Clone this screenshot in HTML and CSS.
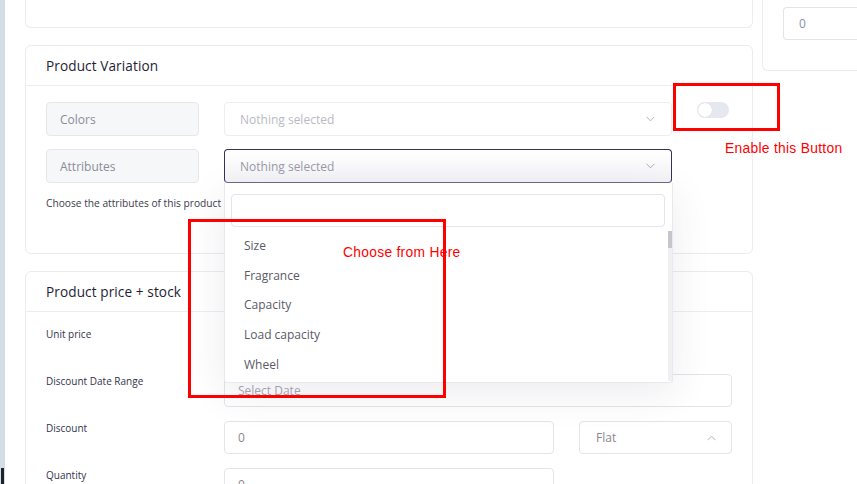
FILE: index.html
```html
<!DOCTYPE html>
<html lang="en">
<head>
<meta charset="utf-8">
<title>Product Variation</title>
<link rel="stylesheet" href="styles.css">
</head>
<body>
<div class="page">
  <div class="edge"><div class="edge-dark"></div></div>
  <main class="main">
    <section class="card card-cut"></section>

    <section class="card card-variation">
      <div class="card-header">Product Variation</div>
      <div class="card-body">
        <div class="var-row">
          <div class="label-box">Colors</div>
          <div class="select">
            <span class="placeholder">Nothing selected</span>
            <svg class="chev" width="9" height="6" viewBox="0 0 9 6"><path d="M0.5 0.8 L4.5 4.8 L8.5 0.8" fill="none" stroke="#b4b4c0" stroke-width="1"/></svg>
          </div>
          <div class="toggle"><span class="knob"></span></div>
        </div>
        <div class="var-row">
          <div class="label-box">Attributes</div>
          <div class="select-wrap">
            <div class="select select-open">
              <span class="placeholder dark">Nothing selected</span>
              <svg class="chev" width="9" height="6" viewBox="0 0 9 6"><path d="M0.5 0.8 L4.5 4.8 L8.5 0.8" fill="none" stroke="#a8a8b6" stroke-width="1"/></svg>
            </div>
            <div class="dropdown">
              <div class="dd-search"></div>
              <div class="dd-list">
                <ul class="dd-items">
                  <li>Size</li>
                  <li>Fragrance</li>
                  <li>Capacity</li>
                  <li>Load capacity</li>
                  <li>Wheel</li>
                </ul>
                <div class="dd-scroll"><div class="dd-thumb"></div></div>
              </div>
            </div>
          </div>
        </div>
        <p class="help">Choose the attributes of this product</p>
      </div>
    </section>

    <section class="card card-price">
      <div class="card-header">Product price + stock</div>
      <div class="card-body price-body">
        <div class="price-row">
          <div class="field-label">Unit price</div>
          <div class="input"><span class="value">0</span></div>
        </div>
        <div class="price-row">
          <div class="field-label">Discount Date Range</div>
          <div class="input input-wide"><span class="placeholder date">Select Date</span></div>
        </div>
        <div class="price-row">
          <div class="field-label">Discount</div>
          <div class="input"><span class="value">0</span></div>
          <div class="input select-flat">
            <span class="value">Flat</span>
            <svg class="chev" width="9" height="6" viewBox="0 0 9 6"><path d="M0.5 5.2 L4.5 1.2 L8.5 5.2" fill="none" stroke="#b9b0bd" stroke-width="1"/></svg>
          </div>
        </div>
        <div class="price-row">
          <div class="field-label">Quantity</div>
          <div class="input"><span class="value">0</span></div>
        </div>
      </div>
    </section>
  </main>
  <aside class="side">
    <div class="card side-card">
      <div class="input side-input"><span class="value blue">0</span></div>
    </div>
  </aside>
</div>

<div class="note-box note-box-toggle"></div>
<div class="note-text note-text-toggle">Enable this Button</div>
<div class="note-box note-box-list"></div>
<div class="note-text note-text-list">Choose from Here</div>
</body>
</html>
```

FILE: styles.css
```css
* { box-sizing: border-box; }

html, body {
  margin: 0;
  padding: 0;
  background: #ffffff;
}

body {
  width: 857px;
  height: 484px;
  overflow: hidden;
  position: relative;
  font-family: "Open Sans", "Liberation Sans", sans-serif;
  color: #23233a;
}

.page {
  display: flex;
  height: 484px;
  overflow: hidden;
}

.edge {
  width: 5px;
  flex: none;
  background: #d3dde6;
  display: flex;
  flex-direction: column;
}

.edge-dark {
  margin-top: auto;
  margin-left: 1px;
  width: 3px;
  height: 16px;
  background: #1f1f2e;
}

.main {
  width: 748px;
  flex: none;
  padding-left: 20px;
  display: flex;
  flex-direction: column;
  gap: 17px;
}

.card {
  background: #ffffff;
  border: 1px solid #ebebf0;
  border-radius: 6px;
  flex: none;
}

.card-cut {
  height: 28px;
  border-top: none;
  border-radius: 0 0 6px 6px;
}

.card-header {
  height: 40px;
  border-bottom: 1px solid #ececf1;
  padding: 0 20px;
  display: flex;
  align-items: center;
  font-size: 13.6px;
  font-weight: 500;
  color: #1e1e36;
  letter-spacing: 0.1px;
}

.card-body {
  padding: 16px 20px 0 20px;
}

.card-variation {
  height: 209px;
}

.var-row {
  display: grid;
  grid-template-columns: 153px 448px 32px;
  column-gap: 25px;
  align-items: start;
  margin-bottom: 13px;
}

.var-row:nth-child(2) {
  margin-bottom: 0;
}

.label-box {
  height: 34px;
  background: #f6f7f9;
  border: 1px solid #e5e7ec;
  border-radius: 4px;
  padding-left: 13px;
  display: flex;
  align-items: center;
  font-size: 12px;
  color: #8b8b98;
}

.select {
  height: 34px;
  border: 1px solid #ececf2;
  border-radius: 4px;
  padding: 0 14px 0 15px;
  display: flex;
  align-items: center;
  justify-content: space-between;
  background: #ffffff;
}

.select-wrap {
  position: relative;
}

.select-open {
  border-color: #34315a;
  border-bottom-color: #6d6a8e;
  background: linear-gradient(#ffffff, #f3f3f7);
}

.placeholder {
  font-size: 12px;
  color: #b9b9c4;
}

.placeholder.dark {
  color: #9a9aa8;
}

.chev {
  display: block;
  margin-right: 2px;
}

.toggle {
  width: 32px;
  height: 16px;
  border-radius: 8px;
  background: #e5e8ef;
  padding: 1px;
  display: flex;
}

.knob {
  width: 14px;
  height: 14px;
  border-radius: 50%;
  background: #ffffff;
  box-shadow: 0 0 1px rgba(0, 0, 0, 0.15);
}

.dropdown {
  position: absolute;
  top: 100%;
  left: 0;
  width: 449px;
  height: 200px;
  background: #ffffff;
  border: 1px solid #e8e8ee;
  border-top: none;
  border-radius: 0 0 3px 3px;
  box-shadow: 0 10px 40px rgba(40, 40, 80, 0.09);
  z-index: 5;
  padding: 11px 7px 0 6px;
  display: flex;
  flex-direction: column;
}

.dd-search {
  height: 33px;
  border: 1px solid #e3e3ea;
  border-radius: 4px;
}

.dd-list {
  margin-top: 4px;
  height: 150px;
  display: flex;
  margin-right: -7px;
}

.dd-items {
  list-style: none;
  margin: 0;
  padding: 0;
  flex: 1;
}

.dd-items li {
  height: 29.6px;
  display: flex;
  align-items: center;
  padding-left: 13px;
  font-size: 12px;
  color: #5a5a66;
}

.dd-scroll {
  width: 4px;
  height: 150px;
  background: #f0f0f2;
}

.dd-thumb {
  height: 17px;
  background: #c6c6cc;
}

.help {
  margin: 13px 0 0 0;
  font-size: 10.2px;
  color: #3b3b4c;
  line-height: 14px;
}

.card-price {
  height: 260px;
}

.price-body {
  padding-top: 15px;
}

.price-row {
  display: grid;
  grid-template-columns: 153px 330px 153px;
  column-gap: 25px;
  align-items: start;
  margin-bottom: 14px;
}

.field-label {
  font-size: 10px;
  color: #33334a;
  padding-top: 1px;
  line-height: 12px;
}

.input {
  height: 33px;
  border: 1px solid #e3e3ea;
  border-radius: 4px;
  padding: 0 14px 0 13px;
  display: flex;
  align-items: center;
  justify-content: space-between;
  background: #ffffff;
}

.input-wide {
  grid-column: 2 / 4;
}

.value {
  font-size: 12px;
  color: #8d8590;
}

.value.blue {
  color: #8a8fb0;
}

.placeholder.date {
  color: #a7a7b4;
}

.select-flat {
  padding-left: 16px;
  padding-right: 13px;
}

.side {
  margin-left: 9px;
  width: 120px;
  flex: none;
}

.side-card {
  height: 71px;
  border-top: none;
  border-right: none;
  border-radius: 0 0 0 6px;
  padding: 7px 0 0 20px;
}

.side-input {
  border-right: none;
  border-radius: 4px 0 0 4px;
  padding-left: 15px;
}

/* annotation overlays */
.note-box {
  position: absolute;
  border: 3px solid #ff0000;
  z-index: 10;
}

.note-box-toggle {
  left: 673px;
  top: 83px;
  width: 107px;
  height: 48px;
}

.note-box-list {
  left: 188px;
  top: 219px;
  width: 258px;
  height: 179px;
}

.note-text {
  position: absolute;
  font-family: "Liberation Sans", sans-serif;
  font-size: 13.8px;
  color: #ff0000;
  z-index: 10;
  line-height: 16px;
  letter-spacing: 0.3px;
}

.note-text-toggle {
  left: 725px;
  top: 141px;
}

.note-text-list {
  left: 343px;
  top: 245px;
}
```
